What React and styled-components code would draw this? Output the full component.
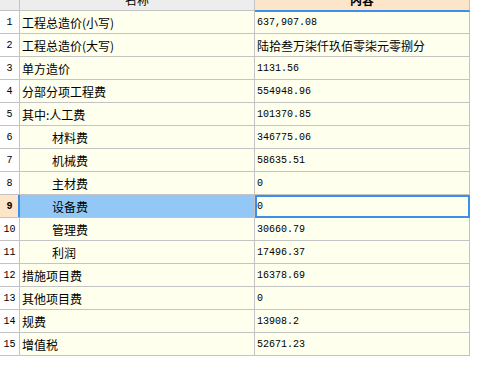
import React from "react";
import styled, { createGlobalStyle, css } from "styled-components";

const Global = createGlobalStyle`
  html, body { margin: 0; padding: 0; background: #ffffff; overflow: hidden; }
  body { font-family: "Noto Sans CJK SC", "Liberation Sans", sans-serif; font-size: 12px; color: #000; }
`;

const LINE = "#c3c3c3";
const BLUE = "#3d8fe8";

const Table = styled.div`
  display: grid;
  grid-template-columns: 20px 235px 215px;
  grid-auto-rows: 23px;
  grid-template-rows: 11px;
  width: 470px;
`;

const HeadCell = styled.div`
  box-sizing: border-box;
  height: 11px;
  overflow: hidden;
  display: flex;
  align-items: flex-end;
  justify-content: center;
  border-right: 1px solid ${LINE};
  border-bottom: 1px solid ${LINE};
  background: ${(p) => (p.$active ? "#fde5c9" : "#ededed")};
  font-weight: ${(p) => (p.$active ? 700 : 400)};
  ${(p) =>
    p.$active &&
    css`
      border-bottom-color: ${BLUE};
      box-shadow: 0 1px 0 ${BLUE};
      position: relative;
      z-index: 1;
    `}
`;

const HeadLabel = styled.span`
  line-height: 12px;
  margin-bottom: 4px;
`;

const cellBase = css`
  box-sizing: border-box;
  border-right: 1px solid ${LINE};
  border-bottom: 1px solid ${LINE};
  display: flex;
  align-items: center;
  white-space: nowrap;
  overflow: hidden;
`;

const NumCell = styled.div`
  ${cellBase};
  justify-content: center;
  background: ${(p) => (p.$selected ? "#fde5c9" : "#ffffff")};
  font-family: "Liberation Mono", "DejaVu Sans Mono", monospace;
  font-size: 10px;
  font-weight: ${(p) => (p.$selected ? 700 : 400)};
  ${(p) =>
    p.$selected &&
    css`
      border-right-color: ${BLUE};
      box-shadow: inset -1px 0 0 ${BLUE};
    `}
`;

const NameCell = styled.div`
  ${cellBase};
  padding-left: ${(p) => (p.$indent ? 32 : 2)}px;
  background: ${(p) => (p.$selected ? "#93c8f6" : "#ffffee")};
`;

const ValueCell = styled.div`
  ${cellBase};
  padding-left: 2px;
  background: #ffffee;
  font-family: ${(p) =>
    p.$cjk
      ? `"Noto Sans CJK SC", sans-serif`
      : `"Liberation Mono", "DejaVu Sans Mono", monospace`};
  font-size: ${(p) => (p.$cjk ? 12 : 10)}px;
  ${(p) =>
    p.$selected &&
    css`
      outline: 2px solid ${BLUE};
      outline-offset: -2px;
    `}
`;

const rows = [
  { name: "工程总造价(小写)", value: "637,907.08" },
  { name: "工程总造价(大写)", value: "陆拾叁万柒仟玖佰零柒元零捌分", cjk: true },
  { name: "单方造价", value: "1131.56" },
  { name: "分部分项工程费", value: "554948.96" },
  { name: "其中:人工费", value: "101370.85" },
  { name: "材料费", value: "346775.06", indent: true },
  { name: "机械费", value: "58635.51", indent: true },
  { name: "主材费", value: "0", indent: true },
  { name: "设备费", value: "0", indent: true, selected: true },
  { name: "管理费", value: "30660.79", indent: true },
  { name: "利润", value: "17496.37", indent: true },
  { name: "措施项目费", value: "16378.69" },
  { name: "其他项目费", value: "0" },
  { name: "规费", value: "13908.2" },
  { name: "增值税", value: "52671.23" },
];

export default function App() {
  return (
    <>
      <Global />
      <Table>
        <HeadCell />
        <HeadCell>
          <HeadLabel>名称</HeadLabel>
        </HeadCell>
        <HeadCell $active>
          <HeadLabel>内容</HeadLabel>
        </HeadCell>
        {rows.map((r, i) => (
          <React.Fragment key={i}>
            <NumCell $selected={r.selected}>{i + 1}</NumCell>
            <NameCell $indent={r.indent} $selected={r.selected}>
              {r.name}
            </NameCell>
            <ValueCell $cjk={r.cjk} $selected={r.selected}>
              {r.value}
            </ValueCell>
          </React.Fragment>
        ))}
      </Table>
    </>
  );
}
